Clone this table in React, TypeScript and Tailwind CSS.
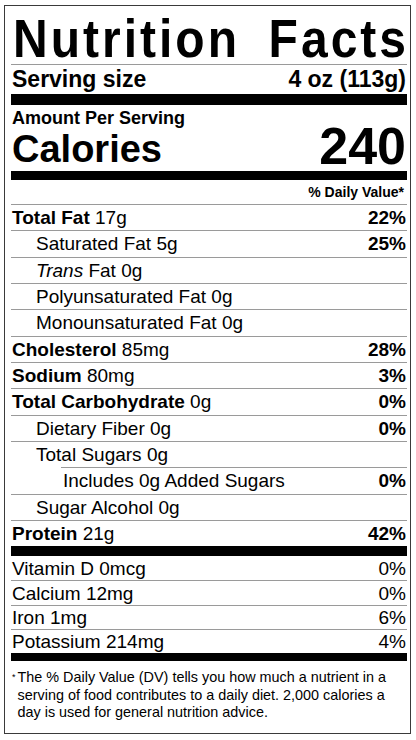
import React from "react";

type Row = {
  label: React.ReactNode;
  amount: string;
  dv?: string;
  bold?: boolean;
  indent?: 0 | 1 | 2;
};

const rows: Row[] = [
  { label: "Total Fat", amount: "17g", dv: "22%", bold: true },
  { label: "Saturated Fat", amount: "5g", dv: "25%", indent: 1 },
  { label: <><i>Trans</i> Fat</>, amount: "0g", indent: 1 },
  { label: "Polyunsaturated Fat", amount: "0g", indent: 1 },
  { label: "Monounsaturated Fat", amount: "0g", indent: 1 },
  { label: "Cholesterol", amount: "85mg", dv: "28%", bold: true },
  { label: "Sodium", amount: "80mg", dv: "3%", bold: true },
  { label: "Total Carbohydrate", amount: "0g", dv: "0%", bold: true },
  { label: "Dietary Fiber", amount: "0g", dv: "0%", indent: 1 },
  { label: "Total Sugars", amount: "0g", indent: 1 },
  { label: "Includes 0g Added Sugars", amount: "", dv: "0%", indent: 2 },
  { label: "Sugar Alcohol", amount: "0g", indent: 1 },
  { label: "Protein", amount: "21g", dv: "42%", bold: true },
];

const vitamins = [
  { label: "Vitamin D", amount: "0mcg", dv: "0%" },
  { label: "Calcium", amount: "12mg", dv: "0%" },
  { label: "Iron", amount: "1mg", dv: "6%" },
  { label: "Potassium", amount: "214mg", dv: "4%" },
];

function NutrientRow({ row }: { row: Row }) {
  const indent = row.indent ?? 0;
  return (
    <div
      className={
        "h-[26.33px] flex items-center justify-between border-t border-[#9a9a9a] pr-[1px] " +
        (indent === 2 ? "ml-[50px] pl-[2px]" : indent === 1 ? "pl-[25px]" : "pl-[1px]")
      }
    >
      <span>
        {row.bold ? <b>{row.label}</b> : row.label}
        {row.amount ? " " + row.amount : ""}
      </span>
      {row.dv && <b>{row.dv}</b>}
    </div>
  );
}

export default function App() {
  return (
    <div className="w-[416px] h-[740px] bg-white pt-[5px] pl-[4px] font-['Liberation_Sans',Arial,sans-serif] text-black">
      <div className="w-[407px] h-[729px] border border-[#3a3a3a] pl-[6px] pr-[3px] flex flex-col">
        <div className="h-[58px] flex items-end justify-between pl-[2px] pr-[1px] text-[48px] font-bold leading-none tracking-[3px]">
          <span className="scale-y-110 origin-bottom translate-y-[2px]">Nutrition</span>
          <span className="scale-y-110 origin-bottom translate-y-[2px] -mr-[3px]">Facts</span>
        </div>

        <div className="h-[30px] flex items-center justify-between border-t border-[#9a9a9a] pl-[1px] pr-[1px] text-[23px] font-bold leading-none">
          <span>Serving size</span>
          <span>4 oz (113g)</span>
        </div>

        <div className="h-[11px] bg-black" />

        <div className="h-[23px] flex items-center pt-[2px] px-[1px] text-[18px] font-bold leading-none">
          Amount Per Serving
        </div>
        <div className="h-[43px] flex items-end justify-between px-[1px] pb-[3px] font-bold leading-none">
          <span className="text-[38px]">Calories</span>
          <span className="text-[52px] leading-[0.8]">240</span>
        </div>

        <div className="h-[9px] bg-black" />

        <div className="h-[24px] flex items-center justify-end pr-[3px] text-[14px] font-bold leading-none">
          % Daily Value*
        </div>

        <div className="text-[19px] leading-none">
          {rows.map((r, i) => (
            <NutrientRow key={i} row={r} />
          ))}
        </div>

        <div className="h-[10px] bg-black" />

        <div className="text-[19px] leading-none">
          {vitamins.map((v, i) => (
            <div
              key={v.label}
              className={
                "h-[24.2px] flex items-center justify-between px-[1px] " +
                (i > 0 ? "border-t border-[#9a9a9a]" : "")
              }
            >
              <span>
                {v.label} {v.amount}
              </span>
              <span>{v.dv}</span>
            </div>
          ))}
        </div>

        <div className="h-[8px] bg-black" />

        <div className="flex-1 flex pt-[8px] pl-[1px] text-[14.4px] leading-[17.5px]">
          <span className="text-[9px] leading-[17.5px] mr-[2px]">*</span>
          <p className="w-[380px]">
            The % Daily Value (DV) tells you how much a nutrient in a serving of food contributes to a
            daily diet. 2,000 calories a day is used for general nutrition advice.
          </p>
        </div>
      </div>
    </div>
  );
}
